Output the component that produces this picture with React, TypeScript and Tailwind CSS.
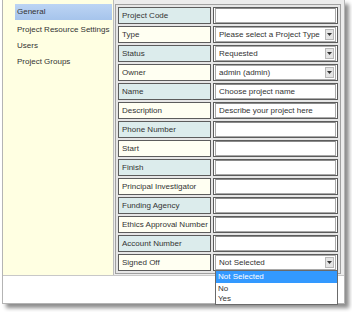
import React from 'react';

type Row = {
    label: string;
    kind: 'text' | 'select';
    value?: string;
};

const rows: Row[] = [
    { label: 'Project Code', kind: 'text' },
    { label: 'Type', kind: 'select', value: 'Please select a Project Type' },
    { label: 'Status', kind: 'select', value: 'Requested' },
    { label: 'Owner', kind: 'select', value: 'admin (admin)' },
    { label: 'Name', kind: 'text', value: 'Choose project name' },
    { label: 'Description', kind: 'text', value: 'Describe your project here' },
    { label: 'Phone Number', kind: 'text' },
    { label: 'Start', kind: 'text' },
    { label: 'Finish', kind: 'text' },
    { label: 'Principal Investigator', kind: 'text' },
    { label: 'Funding Agency', kind: 'text' },
    { label: 'Ethics Approval Number', kind: 'text' },
    { label: 'Account Number', kind: 'text' },
    { label: 'Signed Off', kind: 'select', value: 'Not Selected' },
];

const menu = ['General', 'Project Resource Settings', 'Users', 'Project Groups'];

const Arrow = () => (
    <span className="flex items-center justify-center w-[9px] h-[11px] bg-[#e4e4e4] border border-[#b8b8b8]">
        <svg width="5" height="3" viewBox="0 0 5 3">
            <path d="M0 0 H5 L2.5 3 Z" fill="#333" />
        </svg>
    </span>
);

const Field = ({ row }: { row: Row }) => {
    if (row.kind === 'select') {
        return (
            <div className="flex items-center h-[15px] bg-white border border-[#a9a9a9] pl-[3px] pr-[1px]">
                <span className="flex-1 truncate">{row.value}</span>
                <Arrow />
            </div>
        );
    }
    return (
        <div className="flex items-center h-[15px] bg-white border border-[#a9a9a9] border-t-[#8a8a8a] pl-[3px]">
            {row.value}
        </div>
    );
};

export default function App() {
    return (
        <div className="w-[352px] h-[312px] bg-white overflow-hidden text-[8px] leading-none text-[#333]" style={{ fontFamily: '"Liberation Sans", Arial, sans-serif' }}>
            <div className="relative ml-[2px] w-[343px] h-[304px] bg-white border-l border-r border-b border-[#b4b4b4] shadow-[4px_4px_4px_rgba(0,0,0,0.45)] flex flex-col">
                <div className="flex h-[276px] border-b border-[#c8c8c8]">
                    {/* Sidebar */}
                    <div className="w-[111px] bg-[#ffffe2] border-r border-[#bcbcbc] pt-[4px] pl-[12px] pr-[1px] flex flex-col">
                        {menu.map((m, i) => (
                            <div
                                key={m}
                                className={`h-[16px] flex items-center pl-[2px] ${i === 0 ? 'bg-gradient-to-b from-[#bcd4f4] to-[#a6c4ec] h-[14px] mb-[2px]' : ''}`}
                            >
                                {m}
                            </div>
                        ))}
                    </div>

                    {/* Form */}
                    <div className="flex-1 bg-[#ececec] pt-[4px] pl-[1px]">
                        <table className="border-separate border-spacing-[2px] border border-[#a0a0a0] bg-[#e6e6e6]">
                            <tbody>
                                {rows.map((r, i) => (
                                    <tr key={r.label}>
                                        <td className={`w-[93px] h-[17px] p-0 pl-[3px] border border-[#5c5c5c] whitespace-nowrap ${i % 2 === 0 ? 'bg-[#dcecec]' : 'bg-[#fffff2]'}`}>
                                            {r.label}
                                        </td>
                                        <td className="w-[125px] h-[17px] p-0 px-[1px] border border-[#5c5c5c] bg-white">
                                            <Field row={r} />
                                        </td>
                                    </tr>
                                ))}
                            </tbody>
                        </table>
                    </div>
                </div>

                {/* Open dropdown for Signed Off */}
                <div className="absolute left-[212px] top-[270px] w-[123px] bg-white border border-[#6a6a6a] flex flex-col">
                    <div className="h-[12px] flex items-center pl-[2px] bg-[#3399ff] text-white">Not Selected</div>
                    <div className="h-[11px] flex items-center pl-[2px]">No</div>
                    <div className="h-[10px] flex items-center pl-[2px]">Yes</div>
                </div>
            </div>
        </div>
    );
}
